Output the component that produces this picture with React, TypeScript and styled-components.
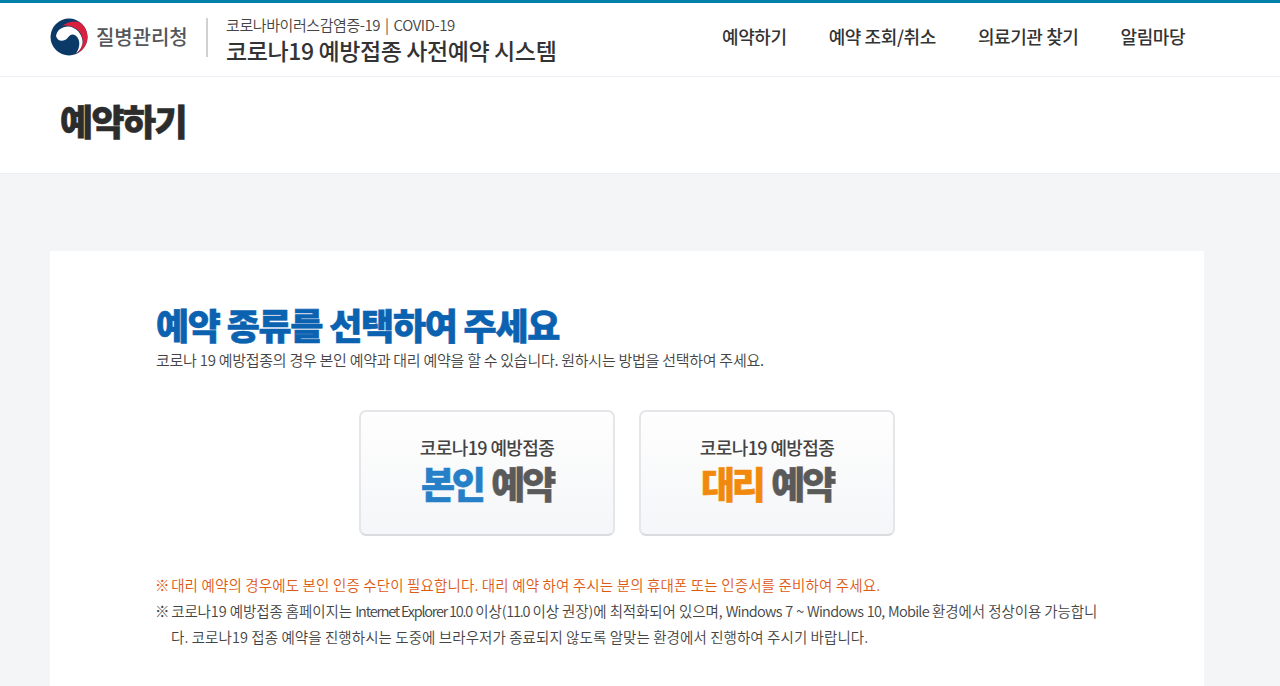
import React from "react";
import styled, { createGlobalStyle } from "styled-components";

const Global = createGlobalStyle`
  html, body { margin: 0; padding: 0; height: 686px; overflow: hidden; background: #f4f5f7; }
  body { font-family: "Noto Sans CJK KR", "Noto Sans", sans-serif; color: #333; }
  * { box-sizing: border-box; }
`;

const Page = styled.div`
  display: flex;
  flex-direction: column;
  height: 686px;
  overflow: hidden;
`;

const Header = styled.header`
  height: 77px;
  flex: none;
  background: #fff;
  border-top: 3px solid #0280a9;
  border-bottom: 1px solid #eeeef4;
  display: flex;
  align-items: center;
  padding: 0 0 2px 50px;
`;

const Brand = styled.div`
  display: flex;
  align-items: center;
  width: 156px;
  gap: 8px;
  margin-bottom: 4px;
`;

const BrandName = styled.span`
  font-size: 20px;
  font-weight: 500;
  letter-spacing: -0.1px;
  color: #55565a;
  white-space: nowrap;
`;

const Divider = styled.div`
  width: 2px;
  height: 39px;
  background: #cfd1d4;
  margin: 0 18px 2px 0;
`;

const SystemName = styled.div`
  display: flex;
  flex-direction: column;
  width: 496px;
`;

const SystemSub = styled.span`
  font-size: 15px;
  line-height: 20px;
  letter-spacing: -0.42px;
  word-spacing: 2px;
  color: #444;
  font-weight: 350;
  white-space: nowrap;
  padding-top: 2px;
`;

const SystemTitle = styled.span`
  font-size: 23px;
  line-height: 30px;
  font-weight: 500;
  letter-spacing: -0.4px;
  color: #333;
  white-space: nowrap;
`;

const Nav = styled.nav`
  display: flex;
  gap: 42px;
  margin-bottom: 6px;
`;

const NavLink = styled.a`
  font-size: 18px;
  font-weight: 500;
  letter-spacing: -0.4px;
  color: #333;
  white-space: nowrap;
`;

const TitleBand = styled.div`
  height: 97px;
  flex: none;
  background: #fff;
  border-bottom: 1px solid #eceef2;
  padding: 0 0 11px 60px;
  display: flex;
  align-items: center;
`;

const PageTitle = styled.h1`
  margin: 0;
  font-size: 36px;
  font-weight: 900;
  letter-spacing: -1.65px;
  color: #2c2c2c;
  -webkit-text-stroke: 0.6px #2c2c2c;
`;

const Body = styled.main`
  flex: 1;
  padding: 77px 76px 0 50px;
`;

const Card = styled.section`
  background: #fff;
  height: 500px;
  padding: 50px 106px 0;
`;

const Heading = styled.h2`
  margin: 0 0 2px;
  font-size: 36px;
  line-height: 46px;
  font-weight: 900;
  letter-spacing: -1.27px;
  color: #0b62b0;
  white-space: nowrap;
  -webkit-text-stroke: 0.6px #0b62b0;
`;

const Lead = styled.p`
  margin: 0;
  font-size: 15px;
  line-height: 22px;
  letter-spacing: -0.27px;
  font-weight: 350;
  color: #444;
  white-space: nowrap;
`;

const Choices = styled.div`
  display: flex;
  justify-content: center;
  gap: 24px;
  margin: 39px 0 0 0;
`;

const Choice = styled.button`
  width: 256px;
  height: 126px;
  border: 2px solid #e5e6e9;
  border-bottom-color: #dadbde;
  border-radius: 7px;
  background: linear-gradient(#fefefe, #f5f6f8);
  display: flex;
  flex-direction: column;
  align-items: center;
  padding: 21px 0 0;
  font-family: inherit;
`;

const ChoiceSub = styled.span`
  font-size: 18px;
  line-height: 28px;
  font-weight: 500;
  letter-spacing: -0.6px;
  color: #444;
`;

const ChoiceMain = styled.span`
  font-size: 37px;
  line-height: 44px;
  font-weight: 900;
  letter-spacing: -3.1px;
  word-spacing: 3px;
  color: #5a5a5a;
  -webkit-text-stroke: 0.5px currentColor;
`;

const Accent = styled.span<{ $color: string }>`
  color: ${(p) => p.$color};
`;

const Notes = styled.div`
  margin-top: 36px;
  width: 945px;
`;

const Note = styled.p<{ $warn?: boolean }>`
  margin: 0;
  padding-left: 15px;
  text-indent: -16px;
  font-size: 14.5px;
  line-height: 26px;
  font-weight: 350;
  letter-spacing: ${(p) => (p.$warn ? "0.14px" : "0.07px")};
  color: ${(p) => (p.$warn ? "#dd5a14" : "#444")};
  word-break: break-all;
`;

const Mark = styled.span`
  letter-spacing: -0.8px;
`;

const Squeezed = styled.span`
  letter-spacing: -0.1px;
`;

const Latin = styled.span<{ $tight?: boolean }>`
  letter-spacing: ${(p) => (p.$tight ? "-1.2px" : "-0.7px")};
  word-spacing: ${(p) => (p.$tight ? "0" : "1px")};
`;

const Logo = () => (
  <svg width="38" height="38" viewBox="0 0 38 38" aria-hidden="true" style={{ flex: "none" }}>
    <circle cx="19" cy="19" r="18.500" fill="#0c3a68" />
    <path d="M12 8 C18 3.500 25 2.500 30 4.500 C34.500 8 37.500 13 37.500 19 C37.500 26 33.500 32.500 26 36 C33 30 34.500 23 31 16 C27 9.500 19 6.500 12 8 Z" fill="#d8213f" />
    <path d="M6 18 C7 11.500 13 8 19 8.500 C26 9.500 32 15.500 32.500 23 C32.800 28 30 32.500 26 35.500 C30.500 29 30.500 21 25.500 17.500 C22 15.200 19.500 17.500 17.500 20 C14.500 23.500 8 24.500 6 18 Z" fill="#fff" />
  </svg>
);

export default function App() {
  return (
    <Page>
      <Global />
      <Header>
        <Brand>
          <Logo />
          <BrandName>질병관리청</BrandName>
        </Brand>
        <Divider />
        <SystemName>
          <SystemSub>코로나바이러스감염증-19 | COVID-19</SystemSub>
          <SystemTitle>코로나19 예방접종 사전예약 시스템</SystemTitle>
        </SystemName>
        <Nav>
          <NavLink>예약하기</NavLink>
          <NavLink>예약 조회/취소</NavLink>
          <NavLink>의료기관 찾기</NavLink>
          <NavLink>알림마당</NavLink>
        </Nav>
      </Header>
      <TitleBand>
        <PageTitle>예약하기</PageTitle>
      </TitleBand>
      <Body>
        <Card>
          <Heading>예약 종류를 선택하여 주세요</Heading>
          <Lead>코로나 19 예방접종의 경우 본인 예약과 대리 예약을 할 수 있습니다. 원하시는 방법을 선택하여 주세요.</Lead>
          <Choices>
            <Choice>
              <ChoiceSub>코로나19 예방접종</ChoiceSub>
              <ChoiceMain>
                <Accent $color="#2580c8">본인</Accent> 예약
              </ChoiceMain>
            </Choice>
            <Choice>
              <ChoiceSub>코로나19 예방접종</ChoiceSub>
              <ChoiceMain>
                <Accent $color="#f18a0c">대리</Accent> 예약
              </ChoiceMain>
            </Choice>
          </Choices>
          <Notes>
            <Note $warn><Mark>※ </Mark>대리 예약의 경우에도 본인 인증 수단이 필요합니다. 대리 예약 하여 주시는 분의 휴대폰 또는 인증서를 준비하여 주세요.</Note>
            <Note>
              <Mark>※ </Mark><Squeezed>코로나19 예방접종 홈페이지는 <Latin $tight>Internet Explorer 10.0</Latin> 이상(<Latin $tight>11.0</Latin> 이상 권장)에 최적화되어 있으며, <Latin>Windows 7 ~ Windows 10, Mobile</Latin> 환경에서 정상이용 가능합니</Squeezed>다. 코로나19 접종 예약을 진행하시는 도중에 브라우저가 종료되지 않도록 알맞는 환경에서 진행하여 주시기 바랍니다.
            </Note>
          </Notes>
        </Card>
      </Body>
    </Page>
  );
}
